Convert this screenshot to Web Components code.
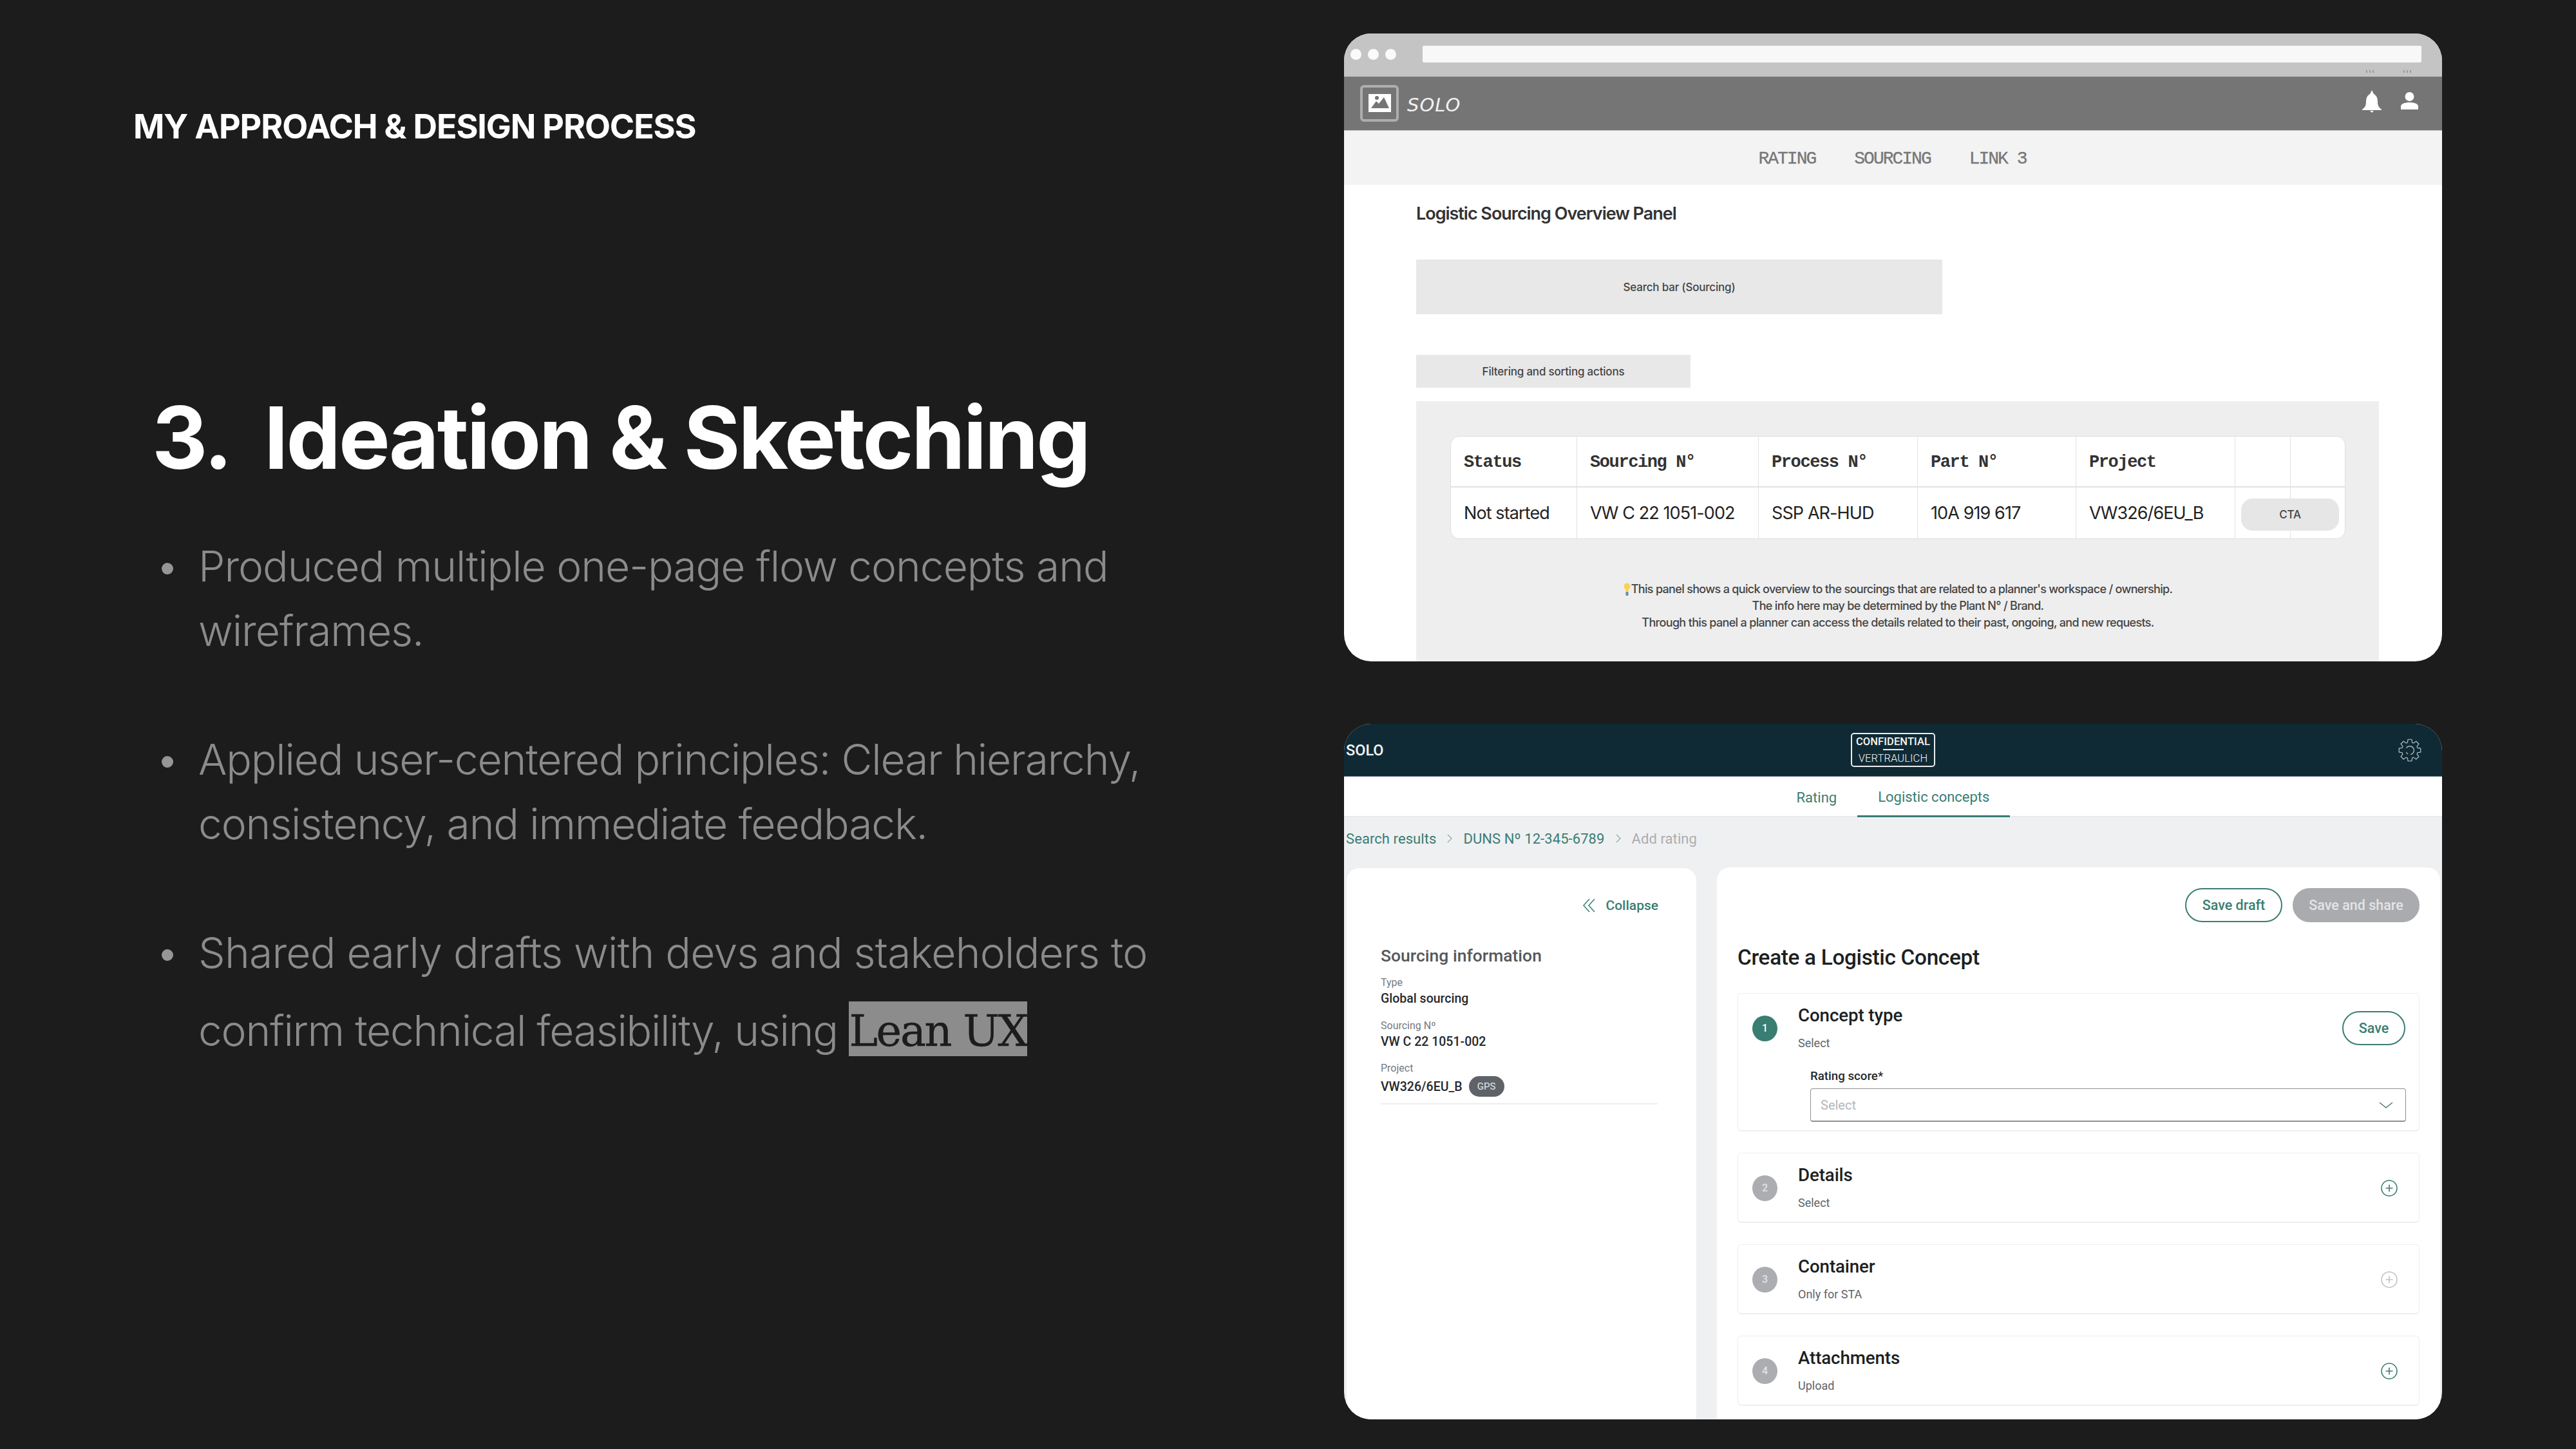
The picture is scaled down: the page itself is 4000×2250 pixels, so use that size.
<!DOCTYPE html>
<html lang="en"><head><meta charset="utf-8"><title>Ideation &amp; Sketching</title>
<style>html,body{margin:0;padding:0;background:#1c1c1c}</style></head>
<body>
<slide-page>
  <intro-panel slot="left">
    <span slot="label">MY APPROACH &amp; DESIGN PROCESS</span>
    <span slot="num">3.</span>
    <span slot="title">Ideation &amp; Sketching</span>
    <bullet-item style="letter-spacing:-1.06px">Produced multiple one-page flow concepts and wireframes.</bullet-item>
    <bullet-item style="letter-spacing:-1.2px">Applied user-centered principles: Clear hierarchy, consistency, and immediate feedback.</bullet-item>
    <bullet-item style="letter-spacing:-.8px">Shared early drafts with devs and stakeholders to <span style="letter-spacing:-1.3px">confirm technical feasibility, using</span> <code-mark>Lean UX</code-mark></bullet-item>
  </intro-panel>
  <wire-window slot="right"></wire-window>
  <solo-window slot="right"></solo-window>
</slide-page>
<script>
function def(name, html, extra){
  const T=document.createElement('template');T.innerHTML=html;
  customElements.define(name,class extends HTMLElement{
    constructor(){super();this.attachShadow({mode:'open'}).appendChild(T.content.cloneNode(true));}
    connectedCallback(){if(extra)extra(this);}
  });
}
def('slide-page',`<style>:host{display:flex;width:4000px;height:2250px;background:#1c1c1c;overflow:hidden}
.l{width:2087px;flex:none}.r{width:1705px;flex:none;display:flex;flex-direction:column;gap:97px;padding-top:52px}</style>
<div class="l"><slot name="left"></slot></div><div class="r"><slot name="right"></slot></div>`);

def('intro-panel',`<style>:host{display:block;font-family:Inter,sans-serif}
.label{margin:167px 0 0 207px;font-size:52px;line-height:60px;font-weight:700;color:#fff;letter-spacing:-1.14px;white-space:nowrap}
.h{display:flex;margin:372px 0 70px 236px;font-size:134px;line-height:160px;font-weight:700;color:#fff;letter-spacing:-3.07px;white-space:nowrap}
.n{width:174px;flex:none}
.list{display:flex;flex-direction:column;gap:100px}</style>
<div class="label"><slot name="label"></slot></div>
<div class="h"><span class="n"><slot name="num"></slot></span><span><slot name="title"></slot></span></div>
<div class="list"><slot></slot></div>`);

def('bullet-item',`<style>:host{display:flex;font-family:Inter,sans-serif;font-size:66px;line-height:100px;font-weight:300;color:#8b8b8b}
i{display:block;flex:none;width:18px;height:18px;border-radius:50%;background:#969696;margin:45px 39px 0 251px}
div{width:1520px}</style><i></i><div><slot></slot></div>`);

def('code-mark',`<style>:host{display:inline-block;background:#8c8c8c;color:#1c1c1c;font-family:"DejaVu Serif",serif;font-size:67px;line-height:72px;padding:10px 0 3px;margin-top:26px;font-weight:400;letter-spacing:-2.3px;white-space:nowrap;-webkit-text-stroke:.5px #1c1c1c}</style><slot></slot>`);

def('wire-window',`<style>
:host{display:block;width:1705px;height:975px;border-radius:42px;overflow:hidden;background:#fff;font-family:Inter,sans-serif;flex:none}
.bar{height:67px;background:#c4c4c4;box-sizing:border-box;padding-top:19px;position:relative;display:flex}
.dots{display:flex;gap:10px;margin-left:10px;height:26px;align-items:center;width:112px;flex:none}
.dots i{width:17px;height:17px;border-radius:50%;background:#fafafa}
.addr{width:1551px;height:26px;background:#f8f8f8;border-radius:2px}
.mini{position:absolute;top:57px;font-size:0;display:flex;gap:3px}.mini i{width:2px;height:4px;background:#9a9a9a}
.top{height:84px;background:#757575;border-bottom:1px solid #bbb;box-sizing:border-box;display:flex;align-items:center;padding:0 37px 0 25px}
.solo{margin:5px 0 0 13px;font:italic 200 29px/1 "DejaVu Sans",sans-serif;color:#f2f2f2;letter-spacing:1px}
.sp{flex:1}
.nav{height:84px;background:#f3f3f3;display:flex;justify-content:center;align-items:center;gap:60px;font:400 28px/1 "Liberation Mono",monospace;letter-spacing:-2px;color:#777;padding:3px 2px 0 0;box-sizing:border-box;-webkit-text-stroke:.3px #777}
.body{padding:0 0 0 112px}
.t{margin-top:28px;line-height:34px;font-size:27px;font-weight:600;color:#333;letter-spacing:-1.03px}
.search{margin-top:54px;width:817px;height:85px;background:#e8e8e8;display:flex;align-items:center;justify-content:center;font-size:17px;font-weight:500;color:#444;letter-spacing:-.2px}
.filter{margin-top:63px;width:426px;height:51px;background:#e8e8e8;display:flex;align-items:center;justify-content:center;font-size:17px;font-weight:500;color:#444;letter-spacing:-.2px}
.panel{margin-top:21px;width:1495px;height:404px;background:#eee;box-sizing:border-box;padding:54px 52px 0 53px}
.tb{width:1390px;height:160px;background:#fff;border:1px solid #dedede;border-radius:14px;box-sizing:border-box;display:grid;grid-template-columns:196px 282px 247px 246px 247px 86px 1fr;grid-template-rows:79px 1fr;overflow:hidden}
.c{border-right:1px solid #e2e2e2;display:flex;align-items:center;padding-left:20px;font-size:27px;color:#222;letter-spacing:-.9px;white-space:nowrap;font-weight:400}
.c.h{font:700 27px/1 "Liberation Mono",monospace;letter-spacing:-1.4px;border-bottom:2px solid #e2e2e2;color:#333;padding-top:3px;box-sizing:border-box}
.c:nth-child(7n){border-right:0}
.cta{position:relative;padding:0}
.cta b{position:absolute;left:9px;top:17px;width:152px;height:50px;border-radius:18px;background:#e6e6e6;display:flex;align-items:center;justify-content:center;font-size:17px;font-weight:500;color:#444;letter-spacing:-.2px;z-index:1}
.note{margin-top:65px;text-align:center;font-size:18px;line-height:26px;font-weight:500;color:#444;letter-spacing:-.67px}
.note svg{vertical-align:-4px;margin-right:1px}
</style>
<div class="bar"><div class="dots"><i></i><i></i><i></i></div><div class="addr"></div>
 <div class="mini" style="left:1587px"><i></i><i></i><i></i></div><div class="mini" style="left:1645px"><i></i><i></i><i></i></div></div>
<div class="top">
 <svg width="60" height="57" viewBox="0 0 60 57"><rect x="2" y="2" width="56" height="53" rx="4" fill="none" stroke="#adadad" stroke-width="4"/><rect x="13" y="14" width="35" height="28" fill="#fff"/><path d="M17 36 L25 25 L29 29 L37 19 L45 36 Z" fill="#757575"/><circle cx="26" cy="20" r="3" fill="#757575"/></svg>
 <span class="solo">SOLO</span><span class="sp"></span>
 <svg width="30" height="35" viewBox="0 0 30 35" style="margin-right:30px;margin-top:-6px"><path d="M15 0l3 6c4 2 6 6 6 12 0 6 2 9 6 12v1H0v-1c4-3 6-6 6-12 0-6 2-10 6-12z M12 32h6l-3 3z" fill="#fff"/></svg>
 <svg width="27" height="27" viewBox="0 0 27 27" style="margin-top:-8px"><ellipse cx="13.5" cy="7" rx="7" ry="7" fill="#fff"/><path d="M0 27v-5c0-4 7-6 13.500-6S27 18 27 22v5z" fill="#fff"/></svg>
</div>
<div class="nav"><span>RATING</span><span>SOURCING</span><span>LINK 3</span></div>
<div class="body">
 <div class="t">Logistic Sourcing Overview Panel</div>
 <div class="search">Search bar (Sourcing)</div>
 <div class="filter">Filtering and sorting actions</div>
 <div class="panel">
  <div class="tb">
   <div class="c h">Status</div><div class="c h">Sourcing N°</div><div class="c h">Process N°</div><div class="c h">Part N°</div><div class="c h">Project</div><div class="c h"></div><div class="c h"></div>
   <div class="c">Not started</div><div class="c">VW C 22 1051-002</div><div class="c">SSP AR-HUD</div><div class="c">10A 919 617</div><div class="c">VW326/6EU_B</div><div class="c cta"><b>CTA</b></div><div class="c"></div>
  </div>
  <div class="note"><svg width="11" height="20" viewBox="0 0 11 20"><circle cx="5.500" cy="5.500" r="5" fill="#f7d44c"/><path d="M3 9h5l-1 6H4z" fill="#f7d44c"/><rect x="3.500" y="14" width="4" height="6" rx="1" fill="#5c8fb5"/></svg>This panel shows a quick overview to the sourcings that are related to a planner's workspace / ownership.<br>The info here may be determined by the Plant N° / Brand.<br>Through this panel a planner can access the details related to their past, ongoing, and new requests.</div>
 </div>
</div>`);

def('pill-button',`<style>:host{display:flex;align-items:center;justify-content:center;box-sizing:border-box;height:53px;border-radius:27px;border:2px solid #3a7d72;color:#3a7d72;font:500 21.5px/1 Roboto,sans-serif;white-space:nowrap;background:#fff}
:host([off]){background:#a9abaf;border-color:#a9abaf;color:#e3e4e6}</style><slot></slot>`);

def('step-card',`<style>:host{display:block;background:#fff;border:1px solid #eceef0;border-bottom-width:2px;border-radius:6px;box-sizing:border-box;font-family:Roboto,sans-serif}
.row{display:flex;align-items:center;padding:18px 33px 18px 22px;position:relative}
.dot{width:39px;height:40px;border-radius:50%;background:#abadb1;color:#e2e3e5;display:flex;align-items:center;justify-content:center;font-size:16px;font-weight:500;margin-right:32px;flex:none}
:host([active]) .dot{background:#3a7d72;color:#fff}
.txt{flex:1}.tt{font-size:27.7px;line-height:32px;font-weight:500;color:#1d1f21;letter-spacing:-.1px}.sub{font-size:18px;line-height:24px;margin-top:15px;color:#5f6368}
svg{display:block}</style>
<div class="row"><div class="dot"><slot name="n"></slot></div><div class="txt"><div class="tt"><slot name="title"></slot></div><div class="sub"><slot name="sub"></slot></div></div><slot name="action"></slot></div>
<slot></slot>`);

def('plus-icon',`<style>:host{display:block;width:26px;height:26px;color:#3a7d72}:host([off]){color:#bfc1c4}svg{display:block}</style>
<svg width="26" height="26" viewBox="0 0 26 26" fill="none" stroke="currentColor" stroke-width="1.600"><circle cx="13" cy="13" r="12"/><path d="M13 7.500v11M7.500 13h11"/></svg>`);

def('solo-window',`<style>
:host{display:block;width:1705px;height:1080px;border-radius:42px;overflow:hidden;background:#eff0f2;font-family:Roboto,sans-serif;flex:none}
.hd{height:82px;background:#102a35;display:grid;grid-template-columns:1fr auto 1fr;align-items:center;color:#fff;border-bottom:1px solid #5d7076;box-sizing:border-box}
.brand{padding-left:3px;font-size:23.5px;font-weight:500;color:#f4f6f6}
.conf{width:131px;height:53px;border:2px solid #e8ecec;border-radius:5px;box-sizing:border-box;display:flex;flex-direction:column;align-items:center;font-size:16.5px;line-height:18px;padding-top:3px;color:#f3f5f5;white-space:nowrap;letter-spacing:.1px}
.conf b{font-weight:500}.conf i{display:block;width:32px;height:2px;background:#eef;margin:2px 0 4px}
.conf span{font-weight:300}
.gear{justify-self:end;margin-right:32px;display:block}
.tabs{height:63px;background:#fff;display:flex;justify-content:center;border-bottom:2px solid #e9eaec;box-sizing:border-box;font-size:22px;color:#3a7d72}
.tabs span{padding:4px 32px 0;display:flex;align-items:center;height:61px;box-sizing:border-box;font-weight:400}
.tabs .on{box-shadow:inset 0 -3px 0 #3a7d72;height:63px;padding-bottom:5px}
.crumb{height:78px;box-sizing:border-box;padding:0 0 12px 3px;display:flex;gap:17px;align-items:center;font-size:22px;color:#3a7d72;letter-spacing:.08px}
.crumb em{font-style:normal;color:#abadb1}
.cols{display:flex;gap:31px;padding-left:3px}
.lc{width:545px;height:857px;background:#fff;border-radius:20px 20px 0 0;box-sizing:border-box;padding:44px 59px 0 53px;border:1px solid #eceef0;border-bottom:0}
.col{display:flex;justify-content:flex-end;align-items:center;gap:16px;height:28px;font-size:21px;font-weight:500;color:#3a7d72}
.si{margin-top:48px;font-size:26.5px;line-height:32px;font-weight:500;color:#55585b}
.lb{font-size:16px;line-height:22px;color:#777a7e}.vl{font-size:19.500px;line-height:26px;font-weight:500;color:#26282b;margin-top:1px}
.gps{display:inline-flex;align-items:center;justify-content:center;width:55px;height:32px;border-radius:16px;background:#5f6368;color:#e6e7e8;font-size:15px;font-weight:400;margin-left:10px}
.pr{display:flex;align-items:center;height:32px;margin-top:1px;font-size:19.500px;font-weight:500;color:#26282b}
.hr{width:430px;height:2px;background:#eceef0;margin-top:10px}
.rc{width:1123px;height:857px;background:#fff;border-radius:20px 20px 0 0;box-sizing:border-box;padding:32px 32px 0;display:flex;flex-direction:column;overflow:hidden}
.btns{display:flex;justify-content:flex-end;gap:16px}
.h1{margin:35px 0;font-size:33.300px;line-height:40px;font-weight:500;color:#1d1f21;letter-spacing:-.3px}
.steps{display:flex;flex-direction:column;gap:33px}
</style>
<div class="hd"><div class="brand">SOLO</div>
 <div class="conf"><b>CONFIDENTIAL</b><i></i><span>VERTRAULICH</span></div>
 <svg class="gear" id="g" width="36" height="36" viewBox="-18 -18 36 36" fill="none" stroke="#b6c2c5" stroke-width="1.200"><path id="gp"/><path d="M-5.500 -3.500A6.500 6.500 0 1 1 1 6.500M-3 6A6.500 6.500 0 0 1 -5.500 3"/></svg></div>
<div class="tabs"><span>Rating</span><span class="on">Logistic concepts</span></div>
<div class="crumb"><span>Search results</span><svg width="8" height="14" viewBox="0 0 8 14" fill="none" stroke="#8aa" stroke-width="1.200"><path d="M1 1l6 6-6 6"/></svg><span>DUNS Nº 12-345-6789</span><svg width="8" height="14" viewBox="0 0 8 14" fill="none" stroke="#8aa" stroke-width="1.200"><path d="M1 1l6 6-6 6"/></svg><em>Add rating</em></div>
<div class="cols">
 <div class="lc">
  <div class="col"><svg width="19" height="22" viewBox="0 0 19 22" fill="none" stroke="#3a7d72" stroke-width="1.500"><path d="M10 1L1 11l9 10M18 1l-9 10 9 10"/></svg><span>Collapse</span></div>
  <div class="si">Sourcing information</div>
  <div class="lb" style="margin-top:15px">Type</div><div class="vl">Global sourcing</div>
  <div class="lb" style="margin-top:18px">Sourcing Nº</div><div class="vl">VW C 22 1051-002</div>
  <div class="lb" style="margin-top:17px">Project</div><div class="pr">VW326/6EU_B<span class="gps">GPS</span></div>
  <div class="hr"></div>
 </div>
 <div class="rc">
  <div class="btns"><pill-button style="width:151px">Save draft</pill-button><pill-button off style="width:197px">Save and share</pill-button></div>
  <div class="h1">Create a Logistic Concept</div>
  <div class="steps">
   <step-card active style="height:215px"><span slot="n">1</span><span slot="title">Concept type</span><span slot="sub">Select</span>
     <pill-button slot="action" style="width:98px;margin-right:-12px">Save</pill-button>
     <rating-field></rating-field></step-card>
   <step-card style="height:109px"><span slot="n">2</span><span slot="title">Details</span><span slot="sub">Select</span><plus-icon slot="action"></plus-icon></step-card>
   <step-card style="height:109px"><span slot="n">3</span><span slot="title">Container</span><span slot="sub">Only for STA</span><plus-icon slot="action" off></plus-icon></step-card>
   <step-card style="height:109px"><span slot="n">4</span><span slot="title">Attachments</span><span slot="sub">Upload</span><plus-icon slot="action"></plus-icon></step-card>
  </div>
 </div>
</div>`,function(el){
  let d='';const r=el.shadowRoot.getElementById('gp');const n=8;
  for(let i=0;i<n;i++){const a=i/n*2*Math.PI;
    const pts=[[12.5,-.30],[17,-.17],[17,.17],[12.5,.30]];
    pts.forEach(([R,o],k)=>{const x=R*Math.cos(a+o),y=R*Math.sin(a+o);d+=(i===0&&k===0?'M':'L')+x.toFixed(2)+' '+y.toFixed(2);});
  }
  r.setAttribute('d',d+'Z');
});

def('rating-field',`<style>:host{display:block;margin:9px 20px 0 112px;font-family:Roboto,sans-serif}
.l{font-size:18.7px;line-height:24px;font-weight:500;color:#26282b}
.f{margin-top:7px;height:52px;border:1px solid #8e9195;border-bottom-width:2px;border-radius:4px;box-sizing:border-box;display:flex;align-items:center;justify-content:space-between;padding:0 19px 0 15px;font-size:20px;color:#b4b6b9}</style>
<div class="l">Rating score*</div><div class="f"><span>Select</span><svg width="22" height="10" viewBox="0 0 22 10" fill="none" stroke="#55777a" stroke-width="1.500"><path d="M1 1l10 8 10-8"/></svg></div>`);
</script>
</body></html>
